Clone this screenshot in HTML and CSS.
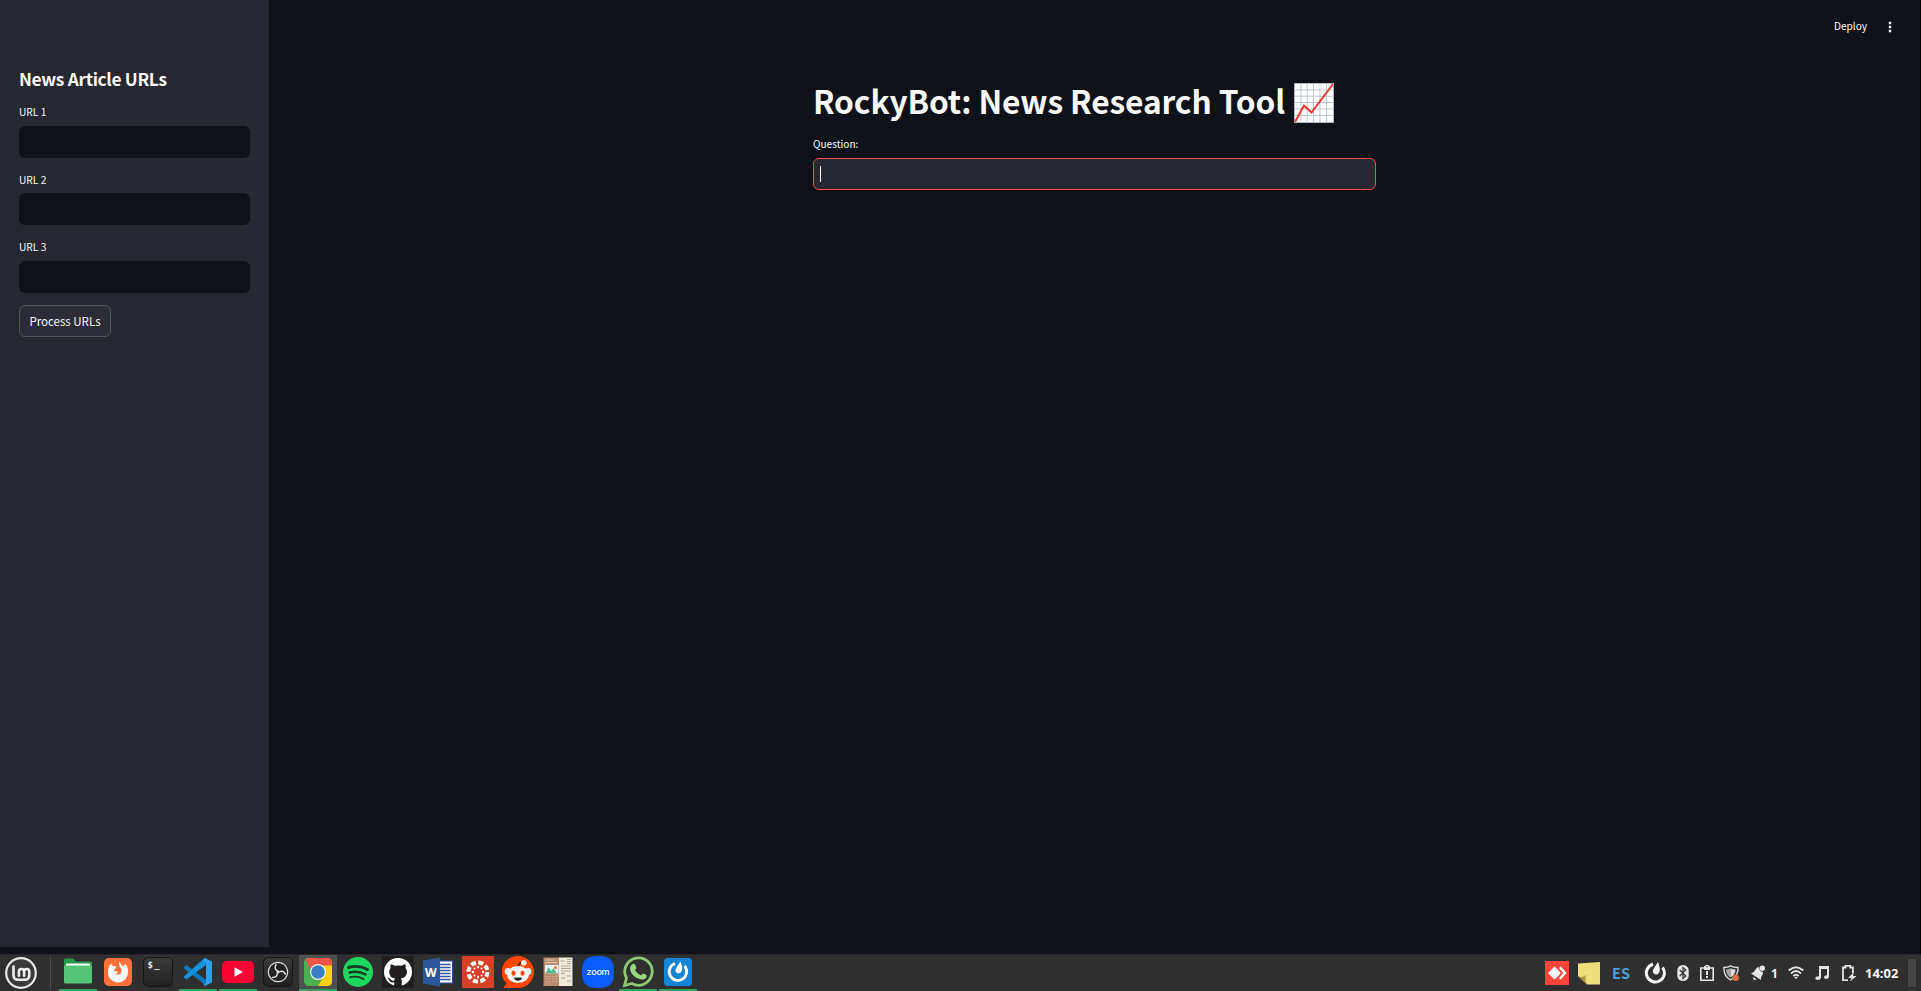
FILE: index.html
```html
<!DOCTYPE html>
<html lang="en">
<head>
<meta charset="utf-8">
<title>RockyBot: News Research Tool</title>
<link rel="stylesheet" href="styles.css">
</head>
<body>
<div class="app">
  <aside class="sidebar">
    <h2 class="side-title">News Article URLs</h2>
    <label class="field"><span class="label">URL 1</span><span class="input"></span></label>
    <label class="field second"><span class="label">URL 2</span><span class="input"></span></label>
    <label class="field last"><span class="label">URL 3</span><span class="input"></span></label>
    <button class="process">Process URLs</button>
  </aside>
  <main class="main">
    <header class="topbar">
      <span class="deploy">Deploy</span>
      <svg class="dots" viewBox="0 0 4 12"><path fill="#fafafa" d="M.8 .8h2.400v2.400H.8zM.8 4.800h2.400v2.400H.8zM.8 8.800h2.400v2.400H.8z"/></svg>
    </header>
    <section class="content">
      <h1 class="title"><span class="title-text">RockyBot: News Research Tool</span>
        <svg class="chart" viewBox="0 0 40 40"><path fill="#90a4ae" d="M0 0h40v40H0z"/><path fill="#fff" d="M.8.8h38.4v38.4H.8z"/><path fill="none" stroke="#b4c1c7" stroke-width=".9" d="M7 0v40M13.2 0v40M19.5 0v40M26 0v40M32.5 0v40M0 7h40M0 13.2h40M0 19.5h40M0 26h40M0 32.5h40"/><path fill="none" stroke="#e53935" stroke-width="2" d="M1 39 10 22.5l7.5 7L39 1"/></svg>
      </h1>
      <div class="question">Question:</div>
      <div class="ask"><i class="caret"></i></div>
    </section>
  </main>
</div>
<footer class="taskbar">
  <svg class="mint" viewBox="0 0 32 32"><circle cx="16" cy="16" r="14.8" fill="#3b3b3b" stroke="#e8e8e8" stroke-width="2.2"/><path fill="none" stroke="#eee" stroke-width="2.6" stroke-linecap="round" d="M8.5 9.5V18q0 4.8 4.8 4.8h6.2q4.8 0 4.8-4.8v-3.3q0-2.700-2.600-2.700t-2.600 2.700v4M19.100 18.500v-3.800q0-2.700-2.600-2.700t-2.600 2.700v4"/></svg>
  <i class="sep"></i>
  <div class="tasks">
    <div class="task on"><svg viewBox="0 0 32 32"><path fill="#259a4c" d="M2 4q0-1.500 1.500-1.500H11l3 3h14.500Q30 5.500 30 7v7H2z"/><path fill="#fff" d="M4 7.500h24v4H4z"/><path fill="#54c576" d="M2 9.500h28V26q0 1.500-1.500 1.500h-25Q2 27.500 2 26z"/></svg></div>
    <div class="task"><svg viewBox="0 0 32 32"><rect x="2" y="2" width="28" height="28" rx="5" fill="#ff7139"/><path fill="#fff" d="M9 7.500l2 3q2-.8 3.500 0l-2.500 3.500q0 1.500 2 1.500h2q-.5 1.500-2.500 2.500 3 1.500 5-.5 2-2.500.3-5.500-2.300-2.500-1.300-6 1.500 3 4.500 4.500l1-3q3.500 4 3 9A10 9.700 0 0 1 6 17Q5.800 11.500 9 7.500z"/></svg></div>
    <div class="task"><svg viewBox="0 0 32 32"><rect x="1.500" y="1.500" width="29" height="29" rx="5" fill="url(#dark)" stroke="#161616"/><text class="prompt" x="5.500" y="11.500" textLength="12">$_</text></svg></div>
    <div class="task on"><svg viewBox="0 0 32 32"><path fill="#0b7bc1" d="M2 11l2.500-2L24 24v5.500L2 12.500z"/><path fill="#1592dc" d="M2 20.500L22.500 2l1.500 7L4.500 23.500 2 21.500z"/><path fill="#2e9fe9" d="M23 2l7 3.500v21L23 30l-1.500-1.500 2.500-2V8l-2-4z"/></svg></div>
    <div class="task on"><svg viewBox="0 0 32 32"><rect y="5" width="32" height="22" rx="5" fill="#ff0033"/><path fill="#fff" d="M12.500 11.300v9.400l8.500-4.700z"/></svg></div>
    <div class="task"><svg viewBox="0 0 32 32"><rect x="1.500" y="1.500" width="29" height="29" rx="5" fill="url(#dark)" stroke="#161616"/><circle cx="16" cy="16" r="9.700" fill="#222" stroke="#ddd" stroke-width="1.200"/><g fill="none" stroke="#e0e0e0" stroke-width="1.500" stroke-linecap="round"><path id="blade" d="M16.500 15.500q-5-2-2.500-7"/><path d="M16.500 15.500q-5-2-2.500-7" transform="rotate(120 16 16)"/><path d="M16.500 15.500q-5-2-2.500-7" transform="rotate(240 16 16)"/></g></svg></div>
    <div class="task on active"><svg viewBox="0 0 32 32"><defs><clipPath id="chr"><rect x="2" y="2" width="28" height="28" rx="4.500"/></clipPath></defs><g clip-path="url(#chr)"><path fill="#4caf50" d="M0 0h32v32H0z"/><path fill="#ffd111" d="M16 9h16v23H15l7-12z"/><path fill="#ef5448" d="M3 2h29v7.500H16L10 17z"/></g><circle cx="16" cy="16" r="8" fill="#f4f4f4"/><circle cx="16" cy="16" r="6.800" fill="#397fc4"/></svg></div>
    <div class="task"><svg viewBox="0 0 32 32"><circle cx="16" cy="16" r="15" fill="#1ed760"/><path fill="none" stroke="#173c22" stroke-linecap="round" stroke-width="2.900" d="M6.500 11.500q10-3 19 2"/><path fill="none" stroke="#173c22" stroke-linecap="round" stroke-width="2.400" d="M7.500 16.500q9-2.300 16 2"/><path fill="none" stroke="#173c22" stroke-linecap="round" stroke-width="1.900" d="M8 21.200q7.500-1.700 13.500 1.800"/></svg></div>
    <div class="task"><svg viewBox="0 0 32 32"><path fill="#211e1f" d="M0 0h32v32H0z"/><circle cx="16" cy="16" r="14" fill="#fff"/><path fill="#211e1f" d="M12.200 30.500v-4.300q-4 .8-5-1.700-.8-2-2-2.700 1.800-.6 3 1.300 1.400 2.200 4 1.300.2-1.200 1-1.800-6-.7-6-6.800 0-2.300 1.400-3.800-.6-1.800.2-3.700 1.600 0 3.900 1.500 3.300-.8 6.800 0 2.200-1.500 3.800-1.500.8 1.900.2 3.700 1.500 1.500 1.500 3.800 0 6-6.200 6.800 1 1 1 2.700v5.200z"/></svg></div>
    <div class="task"><svg viewBox="0 0 32 32"><path fill="#fff" stroke="#2b579a" d="M16 5h14.500v22H16z"/><path stroke="#2b579a" stroke-width="1.500" d="M18 8.500h10.500M18 11.500h10.500M18 14.500h10.500M18 17.500h10.500M18 20.500h10.500M18 23.500h10.500"/><path fill="#2b579a" d="M1 4.500L18 1.500v29L1 27.500z"/><text class="word" x="3" y="20.500">W</text></svg></div>
    <div class="task"><svg viewBox="0 0 32 32"><path fill="#d64027" d="M0 0h32v32H0z"/><circle cx="16" cy="16" r="9.500" fill="none" stroke="#fff" stroke-width="4" stroke-dasharray="5 2.461"/><g fill="#fff"><circle cx="16" cy="11" r="1.200"/><circle cx="16" cy="21" r="1.200"/><circle cx="11" cy="16" r="1.200"/><circle cx="21" cy="16" r="1.200"/><circle cx="12.500" cy="12.500" r="1"/><circle cx="19.500" cy="19.500" r="1"/><circle cx="12.500" cy="19.500" r="1"/><circle cx="19.500" cy="12.500" r="1"/></g></svg></div>
    <div class="task"><svg viewBox="0 0 32 32"><path fill="#ff4500" d="M16 0a16 16 0 1 1 0 32H2.500q-1.500-.5-.5-1.500l2.500-3A16 16 0 0 1 16 0z"/><path fill="none" stroke="#222" stroke-width="1.300" d="M16 12q0-5 4-5.500"/><circle cx="21.800" cy="6.800" r="2.800" fill="#eef3f6"/><circle cx="6" cy="15.500" r="3.400" fill="#e6edf1"/><circle cx="26" cy="15.500" r="3.400" fill="#e6edf1"/><ellipse cx="16" cy="18.500" rx="11" ry="8.500" fill="#f4f7f9"/><ellipse cx="11.500" cy="17.300" rx="2" ry="2.700" fill="#ff4500"/><ellipse cx="20.500" cy="17.300" rx="2" ry="2.700" fill="#ff4500"/><path fill="#222" d="M11.800 21.800q4.200-.8 8.400 0-1 3-4.200 3t-4.200-3z"/></svg></div>
    <div class="task"><svg viewBox="0 0 32 32"><path fill="#b98c70" d="M1.500 1.500H17V30H1.500z"/><path fill="#f1eadb" d="M17 1.500h13.500V30H17z"/><path fill="#e9f5f8" d="M3 9h13.500v12H3z"/><path fill="#53b788" d="M3.500 17.500l3-6 3 3.500 2-3 3.500 5.500z"/><circle cx="13.500" cy="11.500" r="1.600" fill="#f27b35"/><path fill="#b98c70" d="M3 17.500h13.500v4H3z"/><path fill="none" stroke="#e2cbb4" stroke-width="1" d="M3.500 4h9M3.500 6.500h12"/><path fill="none" stroke="#cba78c" stroke-width=".8" d="M3 20.500h6M10 20.500h5.500M3 23h6M10 23h5.500M3 25.500h6M10 25.500h5.500M3 28h6"/><path fill="none" stroke="#9d988a" stroke-width=".8" d="M18.500 5h4M25 3.500h4M25 5.500h4M25 7.500h4M19 10h9.500M19 12.500h9.500M19 15h9.500M19 17.500h4M25 20h4M19 22h4M25 25h4"/></svg></div>
    <div class="task"><svg viewBox="0 0 32 32"><path fill="#0b5cff" d="M16 0C28 0 32 4 32 16s-4 16-16 16S0 28 0 16 4 0 16 0z"/><text class="zoom" x="4.600" y="18.800" textLength="23">zoom</text></svg></div>
    <div class="task on"><svg viewBox="0 0 32 32"><path fill="none" stroke="#8dc972" stroke-width="2.800" d="M2.500 29.500l2-7.300A13.700 13.700 0 1 1 9.800 27.500z"/><path fill="#9bd681" d="M10.500 8q1.500-.8 2.500.5l1.300 3q.3 1-1.300 2.500 2 4 6 5.500l2-2q.8-.3 3.500 1.500.8 1-.5 3-2.500 2.500-6.500 1Q10 20.500 8.200 14q-.7-4 2.300-6z"/></svg></div>
    <div class="task on"><svg viewBox="0 0 32 32"><rect x="2" y="2" width="28" height="28" rx="3.500" fill="#1684d5"/><path fill="none" stroke="#fff" stroke-width="2.800" d="M13 7.500a8.700 8.700 0 1 0 9.500 2.500"/><path fill="#fff" d="M18.500 5.500q2.500 6 1.300 9.300-1.300 3.200-4.300 2.400-3-1.500-1.800-4.200 1-2.300 4.800-7.500z"/></svg></div>
  </div>
  <div class="tray">
    <svg class="anydesk" viewBox="0 0 24 24"><path fill="#ff4539" d="M0 0h24v24H0z"/><path fill="#fff" d="M9.500 5.500L16 12l-6.500 6.500L3 12zM14 7l1.700-1.600 6 6.600-6 6.600L14 17l4.300-5z"/></svg>
    <svg class="note" viewBox="0 0 24 24"><path fill="#eedf7c" d="M1 2.500L23 1v22.500H10L1 15z"/><path fill="#2f2f2f" d="M1 17l9 7H1z"/><path fill="#a89738" d="M1 15q4 2.500 8-1-1.500 5 1 9.500z"/></svg>
    <span class="lang">ES</span>
    <svg class="matter" viewBox="0 0 22 22"><path fill="none" stroke="#f3f3f3" stroke-width="3" d="M9 2.300A9 9 0 1 0 18.500 5.500"/><path fill="#f3f3f3" d="M14 0q2.500 6.500 1.500 10-1.500 3.300-4.500 2.300-3.200-1.800-1.700-4.800 1-2 4.700-7.500z"/></svg>
    <svg class="bt" viewBox="0 0 12 16"><rect x=".3" width="11.400" height="16" rx="5.500" fill="#e4e4e4"/><path fill="none" stroke="#333" stroke-width="1.200" d="M2.800 5l6 6L6 13.500v-11L8.800 5l-6 6"/></svg>
    <svg class="clip" viewBox="0 0 14 16"><path fill="none" stroke="#e8e8e8" stroke-width="1.600" d="M.8 3h12.400v12.200H.8z"/><path fill="#e8e8e8" d="M4 1.500L6 0h2l2 1.500V5H4zM6 6h2v4H6zM6 11h2v2H6z"/><path fill="#333" d="M6.300 1.200h1.400v1H6.300z"/></svg>
    <svg class="shield" viewBox="0 0 16 16"><path fill="#303030" stroke="#dedede" stroke-width="1.400" d="M.9 2.500Q5 2.500 7.500.8 10 2.500 15 2.500q.5 8-7.500 12.500Q.6 11 .9 2.500z"/><path fill="#aaa" d="M3 4.500q2.500 0 4.500-1.200v9.200Q3.300 10 3 4.500z"/><path fill="#ddd" d="M7.500 3.300Q9.500 4.500 12.500 4.500 12.500 10 7.500 12.500z"/><circle cx="12.700" cy="12.700" r="3.200" fill="#e06c37"/></svg>
    <svg class="bell" viewBox="0 0 14 16"><path fill="#e4e4e4" d="M0 8.500Q3.500 7 4.500 4.500 5.500 2 8 2q0 4.500 4 5.200.3 1.800-1 3.300-1.500 1.500-1 4.500z"/><circle cx="11.300" cy="3.300" r="2.700" fill="#e4e4e4"/><path fill="#e4e4e4" d="M2.500 12l3 2.300Q3.500 15.500 2.500 14.500 1.800 13.500 2.500 12z"/></svg>
    <span class="count">1</span>
    <svg class="wifi" viewBox="0 0 16 14"><path fill="none" stroke="#e4e4e4" stroke-width="1.900" d="M.7 4.500q7.300-6.500 14.600 0M3 7.500q5-4.800 10 0M5.300 10.200q2.700-2.700 5.400 0"/><path fill="#e4e4e4" d="M6.300 11.300q1.700-1.300 3.400 0L8 13.300z"/></svg>
    <svg class="music" viewBox="0 0 14 14"><path fill="#e4e4e4" d="M4 0h10v11q-.5 2-3 2-2 0-2-1.700 0-2 3-2V3H6v8.500Q5.500 14 2.500 14 0 13.500.2 12q.5-2 3.800-1.800z"/></svg>
    <svg class="battery" viewBox="0 0 14 16"><path fill="none" stroke="#e4e4e4" stroke-width="1.800" d="M6 15.100H1V2.500h2.500V.9h4.800v1.600h2.600V8"/><path fill="#e4e4e4" d="M12 7l-6 6h3.500L8 16.500 14.500 11H11z"/></svg>
    <span class="clock">14:02</span>
    <i class="desk"></i>
  </div>
  <svg class="defs" width="0" height="0"><defs><linearGradient id="dark" x2="0" y2="1"><stop stop-color="#3b3b3b"/><stop offset="1" stop-color="#202020"/></linearGradient></defs></svg>
</footer>
</body>
</html>
```
FILE: styles.css
```css
* { box-sizing: border-box; }
body { margin: 0; height: 991px; overflow: hidden; background: #0e1117; color: #fafafa; font-family: "Noto Sans CJK SC", "Noto Sans", sans-serif; display: flex; flex-direction: column; }
svg { display: block; flex: none; }
.app { display: flex; height: 954px; border-right: 1px solid #000; }
.sidebar { width: 269px; height: 947px; background: #262730; padding: 65px 19px 0; flex: none; }
.side-title { margin: 0; height: 29px; line-height: 28px; font-size: 17.3px; letter-spacing: -.32px; font-weight: 700; white-space: nowrap; }
.field { display: flex; flex-direction: column; height: 67px; padding-top: 9px; }
.field.second { height: 68px; padding-top: 10px; }
.field.second .label { height: 22px; }
.field.last { height: 76px; }
.label { font-size: 10.2px; line-height: 17px; height: 23px; }
.input { height: 32px; border-radius: 6px; background: #0e1117; flex: none; }
.process { display: block; width: 92px; height: 32px; padding: 0; border: 1px solid #53545c; border-radius: 6px; background: #2b2c36; color: #fafafa; font: 11.5px "Noto Sans CJK SC", "Noto Sans", sans-serif; line-height: 30px; }
.main { flex: 1; }
.topbar { height: 80px; display: flex; justify-content: flex-end; padding: 17px 28px 0 0; gap: 21px; }
.deploy { font-size: 10.1px; line-height: 17px; }
.dots { width: 4px; height: 12px; margin-top: 4px; }
.content { width: 563px; margin-left: 544px; }
.title { margin: 0; height: 53px; display: flex; align-items: flex-start; font-size: 31.7px; line-height: 41px; letter-spacing: -.12px; font-weight: 700; white-space: nowrap; }
.title-text { width: 481px; }
.chart { width: 40px; height: 40px; margin-top: 3px; }
.question { height: 25px; padding-top: 2px; font-size: 10.1px; line-height: 17px; }
.ask { height: 32px; border: 1px solid #ff4b4b; border-radius: 6px; background: #262730; padding: 7px 6px; }
.caret { display: block; width: 1px; height: 16px; background: #fff; }
.taskbar { height: 37px; flex: none; background: #2f2f2f; border-top: 1px solid #272727; display: flex; }
.mint { width: 32px; height: 32px; margin: 2px 0 0 5px; }
.sep { width: 1px; height: 34px; margin: 1px 8px 0 13px; background: #494949; }
.tasks { display: flex; gap: 2px; }
.task { width: 38px; height: 36px; padding: 1px 3px 0; }
.task svg { width: 32px; height: 32px; }
.active { background: #505050; }
.on { border-bottom: 2px solid #30a557; }
.prompt { font: bold 9px "DejaVu Sans Mono", monospace; fill: #eee; }
.word { font: bold 12px "Open Sans", sans-serif; fill: #fff; }
.zoom { font: 500 9px Inter, sans-serif; fill: #fff; }
.tray { margin-left: auto; display: flex; align-items: center; height: 36px; font-family: "Noto Sans", sans-serif; font-weight: 700; }
.anydesk { width: 24px; height: 24px; margin-right: 8px; }
.note { width: 24px; height: 24px; margin-right: 11px; }
.lang { width: 32px; font: 700 14.5px/24px "Noto Sans CJK SC", sans-serif; color: #4f9fdb; }
.matter { width: 22px; height: 22px; margin-right: 11px; }
.bt { width: 12px; height: 16px; margin-right: 11px; }
.clip { width: 14px; height: 16px; margin-right: 9px; }
.shield { width: 16px; height: 16px; margin-right: 12px; }
.bell { width: 14px; height: 16px; margin-right: 6px; }
.count { width: 17px; font-size: 12px; }
.wifi { width: 16px; height: 14px; margin-right: 11px; }
.music { width: 14px; height: 14px; margin-right: 13px; }
.battery { width: 14px; height: 16px; margin-right: 9px; }
.clock { width: 43px; font-size: 13px; }
.desk { width: 8px; height: 28px; margin-right: 5px; background: #484848; }
.defs { position: absolute; }
```
